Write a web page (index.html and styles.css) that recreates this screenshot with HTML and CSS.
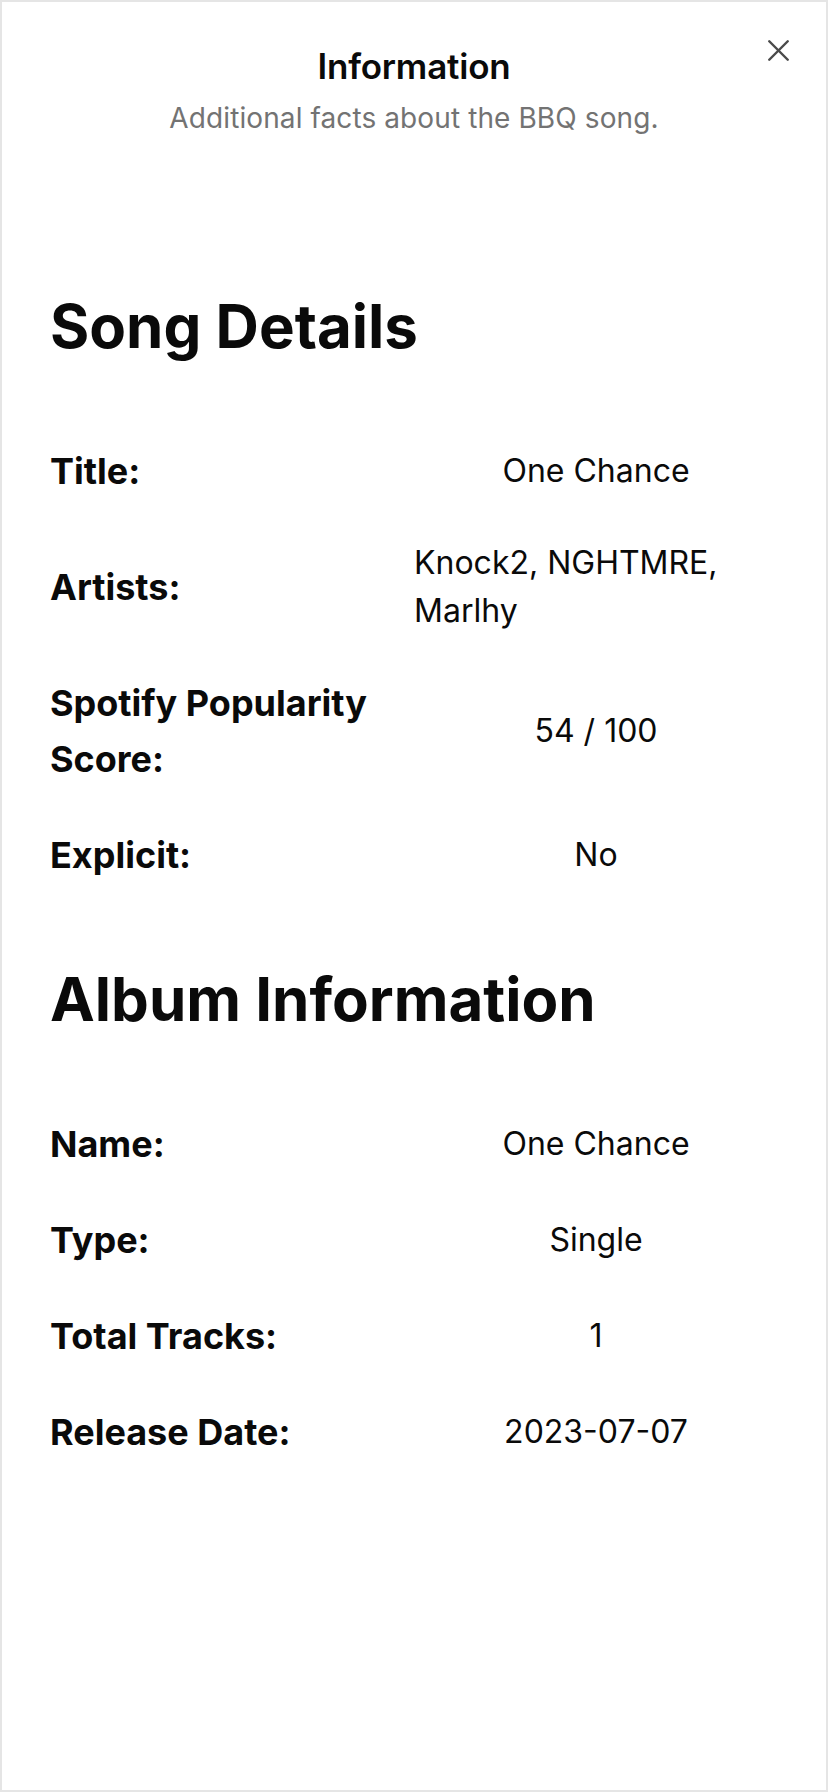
FILE: index.html
```html
<!DOCTYPE html>
<html lang="en">
<head>
<meta charset="utf-8">
<title>Information</title>
<link rel="stylesheet" href="styles.css">
</head>
<body>
<div class="dialog">
  <button class="close" aria-label="Close">
    <svg viewBox="0 0 24 24" width="37" height="37" fill="none" stroke="currentColor" stroke-width="1.6" stroke-linecap="round" stroke-linejoin="round"><path d="M18 6 6 18"/><path d="m6 6 12 12"/></svg>
  </button>
  <header class="header">
    <h2 class="title">Information</h2>
    <p class="desc">Additional facts about the BBQ song.</p>
  </header>
  <section class="section">
    <h3 class="heading">Song Details</h3>
    <dl class="grid">
      <dt class="label">Title:</dt>
      <dd class="value"><span>One Chance</span></dd>
      <dt class="label">Artists:</dt>
      <dd class="value"><span>Knock2, NGHTMRE, Marlhy</span></dd>
      <dt class="label">Spotify Popularity Score:</dt>
      <dd class="value"><span>54 / 100</span></dd>
      <dt class="label">Explicit:</dt>
      <dd class="value"><span>No</span></dd>
    </dl>
  </section>
  <section class="section">
    <h3 class="heading">Album Information</h3>
    <dl class="grid">
      <dt class="label">Name:</dt>
      <dd class="value"><span>One Chance</span></dd>
      <dt class="label">Type:</dt>
      <dd class="value"><span>Single</span></dd>
      <dt class="label">Total Tracks:</dt>
      <dd class="value"><span>1</span></dd>
      <dt class="label">Release Date:</dt>
      <dd class="value"><span>2023-07-07</span></dd>
    </dl>
  </section>
</div>
</body>
</html>
```

FILE: styles.css
```css
* { box-sizing: border-box; }
html, body { margin: 0; padding: 0; background: #ffffff; }
body {
  font-family: Inter, "Noto Sans", "Liberation Sans", sans-serif;
  color: #0a0a0a;
}
.dialog {
  position: relative;
  min-height: 100vh;
  border: 2px solid #e5e5e5;
  padding: 36px 48px 48px;
  background: #ffffff;
}
.close {
  position: absolute;
  top: 30px;
  right: 29px;
  width: 37px;
  height: 37px;
  padding: 0;
  border: 0;
  background: transparent;
  color: #4a4a4a;
  display: flex;
  align-items: center;
  justify-content: center;
}
.header {
  text-align: center;
  display: flex;
  flex-direction: column;
  gap: 4px;
}
.title {
  margin: 0;
  font-size: 35px;
  line-height: 56px;
  font-weight: 600;
  letter-spacing: -0.2px;
}
.desc {
  margin: 0;
  font-size: 28px;
  line-height: 40px;
  color: #737373;
  letter-spacing: 0.1px;
}
.section { margin-top: 152px; }
.section + .section { margin-top: 80px; }
.heading {
  margin: 0 0 81px;
  font-size: 60px;
  line-height: 72px;
  font-weight: 700;
}
.grid {
  margin: 0;
  display: grid;
  grid-template-columns: 1fr 1fr;
  row-gap: 40px;
  align-items: center;
}
.label {
  margin: 0;
  font-size: 36px;
  line-height: 56px;
  font-weight: 700;
}
.value {
  margin: 0;
  display: flex;
  justify-content: center;
  font-size: 32px;
  line-height: 48px;
  font-weight: 400;
}
```
